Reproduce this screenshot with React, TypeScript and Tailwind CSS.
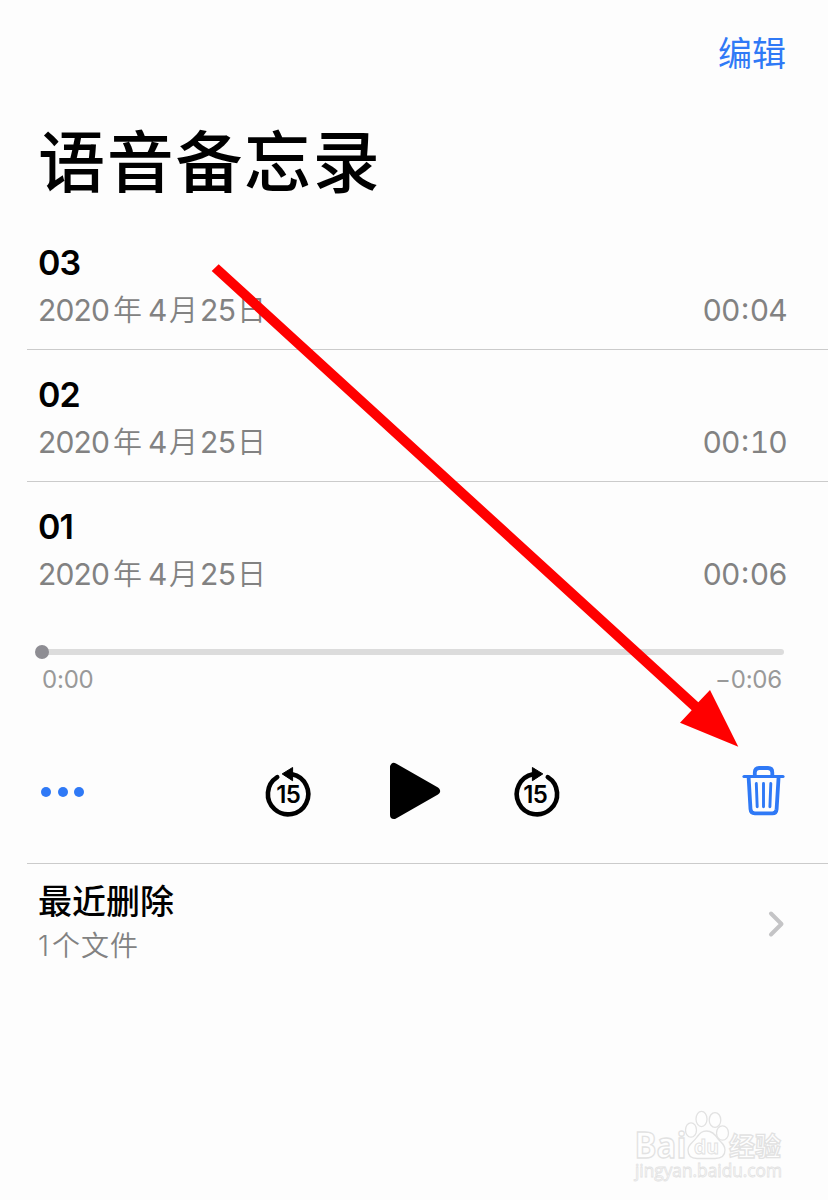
const recordings = [
  { title: "03", duration: "00:04" },
  { title: "02", duration: "00:10" },
  { title: "01", duration: "00:06" },
];

function RecordingInfo({ title, duration }: { title: string; duration: string }) {
  return (
    <>
      <div className="h-[38px] text-[34px] font-semibold leading-[38px] tracking-[-1px] text-black">{title}</div>
      <div className="mt-[9px] flex h-[38px] items-center justify-between text-[30px] leading-[38px] text-[#828282]">
        <div className="flex items-baseline whitespace-nowrap">
          <span className="w-[75px] tracking-[-0.8px]">2020</span>
          <span className="w-[35px] text-[29px] font-[350]">年</span>
          <span className="w-[21px]">4</span>
          <span className="w-[31px] text-[29px] font-[350]">月</span>
          <span className="w-[37px] tracking-[-0.6px]">25</span>
          <span className="text-[29px] font-[350]">日</span>
        </div>
        <span className="tracking-[-0.8px] tabular-nums">
          {duration.slice(0, 2)}
          <span className="relative top-[-2px] inline-block w-[10px] text-center">:</span>
          {duration.slice(3)}
        </span>
      </div>
    </>
  );
}

function SkipIcon({ forward = false }: { forward?: boolean }) {
  return (
    <svg width="50" height="56" viewBox="0 0 50 56">
      <g transform={forward ? "translate(50 0) scale(-1 1)" : undefined}>
        <path
          d="M13.2 13.1A20.2 20.2 0 1 0 28 10.3"
          fill="none"
          stroke="black"
          strokeWidth="4.6"
          strokeLinecap="round"
        />
        <path d="M18.200 9.900L28.6 3.500V16.700Z" fill="black" stroke="black" strokeWidth="1" strokeLinejoin="round" />
      </g>
      <text
        x="24.200"
        y="38.500"
        textAnchor="middle"
        fontSize="24"
        fontWeight="600"
        letterSpacing="-0.6"
      >
        15
      </text>
    </svg>
  );
}

function TrashIcon() {
  return (
    <svg width="44" height="52" viewBox="0 0 44 52" fill="none" stroke="#2f79f6" strokeLinecap="round" strokeLinejoin="round">
      <path d="M2 10.5H41" strokeWidth="3.2" />
      <path d="M12.8 10V6.4Q12.8 2 17 2H26Q30.3 2 30.3 6.4V10" strokeWidth="3.8" />
      <path d="M6.600 11L8.500 43.200Q8.800 47.400 12.800 47.400H30.400Q34.200 47.400 34.600 43.200L36.600 11" strokeWidth="3.8" />
      <path d="M14.300 17.500L15.200 40.700M21.500 17.500V40.700M28.800 17.500L27.900 40.700" strokeWidth="2.9" />
    </svg>
  );
}

function Player() {
  return (
    <>
      <div className="mt-[52px] flex h-[14px] items-center">
        <div className="z-10 ml-[-3px] size-[14px] rounded-full bg-[#8e8d93]" />
        <div className="mr-[3px] ml-[-7px] h-[6px] flex-1 rounded-full bg-[#dcdcdc]" />
      </div>
      <div className="mt-[5px] flex h-[32px] items-center justify-between pr-[5px] pl-[4px] text-[24px] leading-[32px] tracking-[-0.2px] text-[#999999]">
        <span>0:00</span>
        <span>−0:06</span>
      </div>
      <div className="mt-[67px] flex h-[58px] items-center">
        <div className="ml-[3px] flex gap-[6.5px]">
          <i className="size-[10px] rounded-full bg-[#2f79f6]" />
          <i className="size-[10px] rounded-full bg-[#2f79f6]" />
          <i className="size-[10px] rounded-full bg-[#2f79f6]" />
        </div>
        <div className="ml-[179.5px]">
          <SkipIcon />
        </div>
        <svg className="mt-[-2px] ml-[75.5px]" width="52" height="58" viewBox="0 0 52 58">
          <path d="M5 5V53L47 29Z" stroke="black" strokeWidth="8" strokeLinejoin="round" />
        </svg>
        <div className="ml-[70px]">
          <SkipIcon forward />
        </div>
        <div className="ml-[181px]">
          <TrashIcon />
        </div>
      </div>
    </>
  );
}

function Watermark() {
  return (
    <svg
      className="absolute top-[1100px] left-[628px] font-['Open_Sans','Noto_Sans_CJK_SC',sans-serif]"
      width="170"
      height="90"
      viewBox="0 0 170 90"
      fill="#fefefe"
      stroke="#e2e2e2"
      strokeWidth="1.3"
    >
      <text x="6.500" y="57.500" fontSize="35" fontWeight="700" textLength="52" lengthAdjust="spacingAndGlyphs">
        Bai
      </text>
      <ellipse cx="63" cy="30" rx="5.5" ry="7.2" />
      <ellipse cx="73.5" cy="19" rx="5.5" ry="7.6" />
      <ellipse cx="87" cy="20" rx="5.8" ry="7.4" />
      <ellipse cx="94.5" cy="33" rx="6" ry="7.2" />
      <path d="M78.500 31C84 31 87 34 90 39C94 43 97 45 97 50C97 56 93 58.500 87 58.500H69C63 58.500 60 55 60 50C60 44 65 43 69 37C72 33 74 31 78.500 31Z" />
      <text x="66" y="54" fontSize="20" fontWeight="700" strokeWidth="1" textLength="25" lengthAdjust="spacingAndGlyphs">
        du
      </text>
      <text x="101" y="55.500" fontSize="26" fontWeight="700">
        经验
      </text>
      <text x="7" y="76.500" fontSize="18" strokeWidth="0.8" textLength="147" lengthAdjust="spacingAndGlyphs">
        jingyan.baidu.com
      </text>
    </svg>
  );
}

export default function App() {
  return (
    <div className="relative h-[1200px] w-[828px] overflow-hidden bg-[#fdfdfd] font-['Inter','Noto_Sans_CJK_SC',sans-serif]">
      <header className="pr-[42px] pl-[38px]">
        <div className="flex justify-end pt-[33px] text-[34px] leading-[42px] text-[#2f79f6]">编辑</div>
        <h1 className="mt-[43px] h-[90px] text-[67px] leading-[90px] font-medium tracking-[1.700px] text-black">语音备忘录</h1>
      </header>

      <main className="pl-[27px]">
        <div className="h-[142px] border-b border-[#cbcbcb] pt-[36px] pr-[41px] pl-[11px]">
          <RecordingInfo {...recordings[0]} />
        </div>
        <div className="h-[132px] border-b border-[#cbcbcb] pt-[26px] pr-[41px] pl-[11px]">
          <RecordingInfo {...recordings[1]} />
        </div>
        <div className="h-[382px] border-b border-[#cbcbcb] pt-[26px] pr-[41px] pl-[11px]">
          <RecordingInfo {...recordings[2]} />
          <Player />
        </div>
        <div className="flex items-center justify-between pt-[16px] pr-[43px] pl-[11px]">
          <div>
            <div className="text-[34px] leading-[44px] font-medium text-black">最近删除</div>
            <div className="mt-[2px] text-[28px] leading-[40px] font-[350] tracking-[1px] text-[#828282]">
              <span className="mr-[2px]">1</span>个文件
            </div>
          </div>
          <svg className="mt-[2px]" width="18" height="28" viewBox="0 0 18 28" fill="none">
            <path d="M4 3.500L14.500 14L4 24.500" stroke="#c4c4c6" strokeWidth="4" strokeLinecap="round" strokeLinejoin="round" />
          </svg>
        </div>
      </main>

      <Watermark />

      {/* pointer towards the delete button */}
      <svg className="pointer-events-none absolute top-0 left-0 z-20" width="828" height="1200" viewBox="0 0 828 1200">
        <path d="M218.700 264.300L698.300 702.300L710 690L738.300 746.700L680 722.700L691.700 710.300L211.700 271Z" fill="#ff0000" />
      </svg>
    </div>
  );
}
